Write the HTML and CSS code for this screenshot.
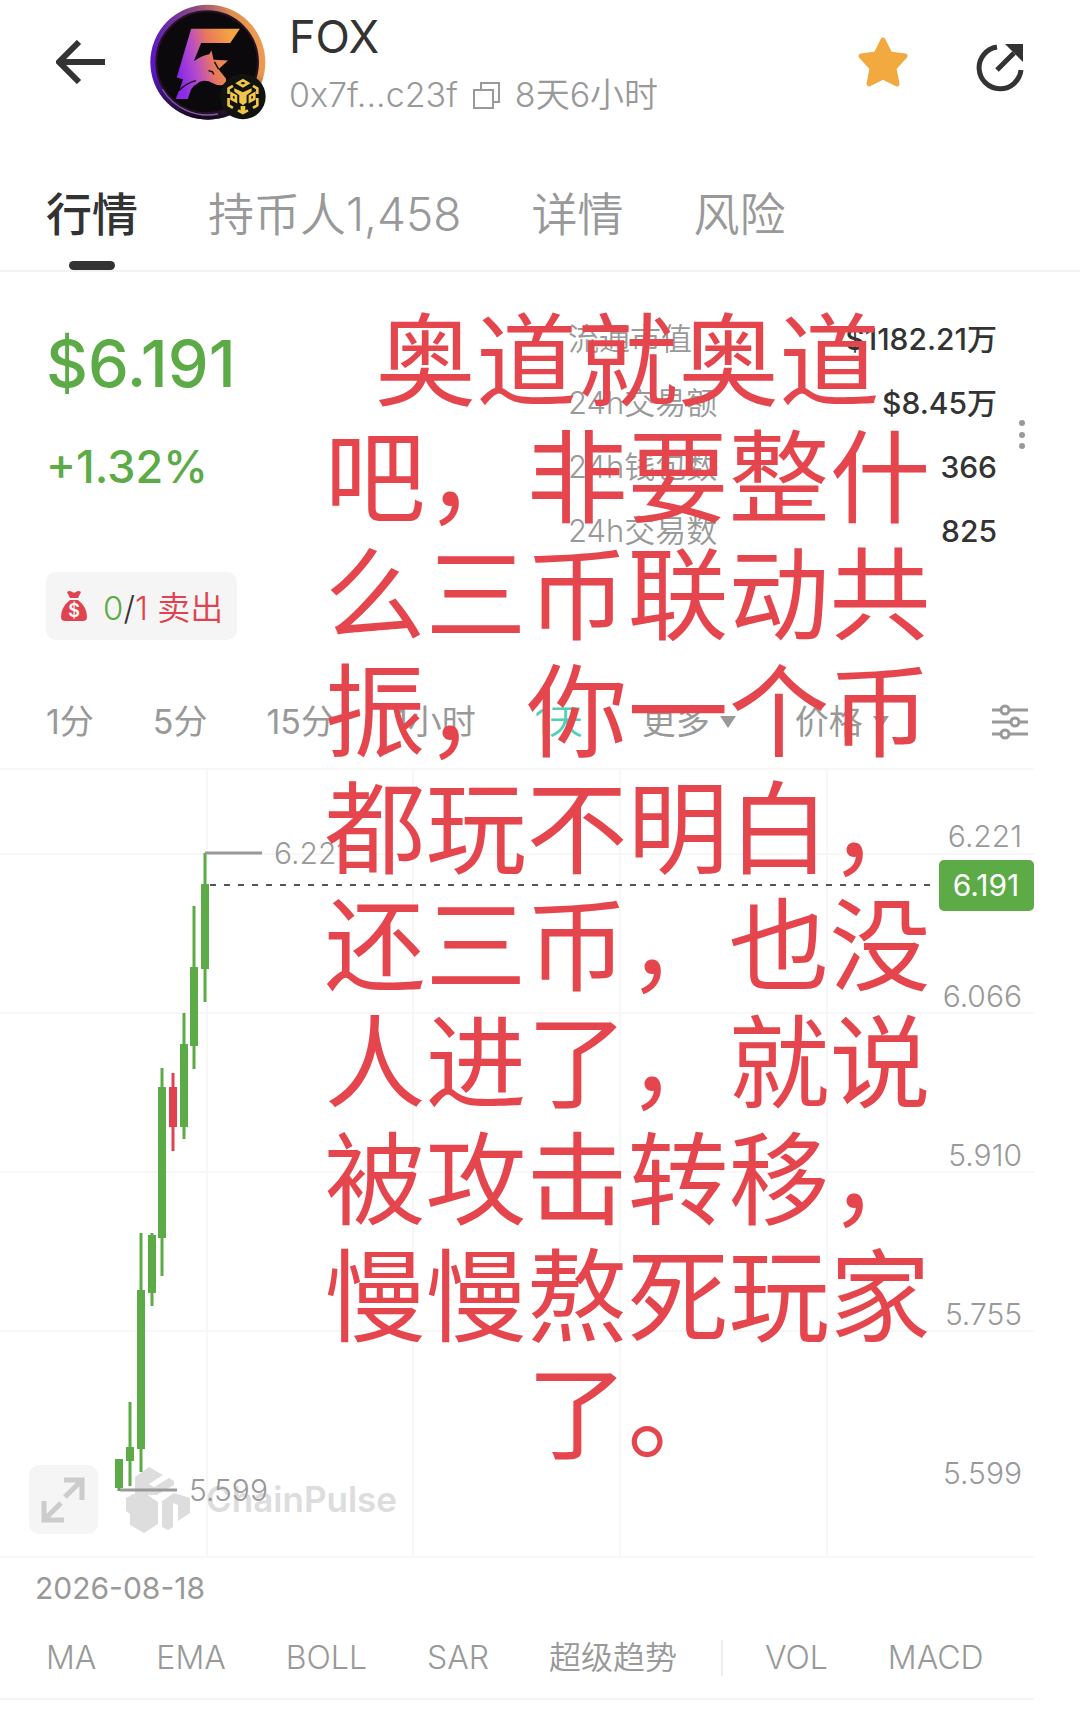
FILE: index.html
```html
<!DOCTYPE html>
<html lang="zh-CN">
<head>
    <meta charset="UTF-8">
    <meta name="viewport" content="width=device-width, initial-scale=1.0">
    <title>FOX</title>
    <link rel="stylesheet" href="styles.css">
</head>
<body>
    <header class="header">
        <button class="icon-btn" aria-label="返回">
            <svg width="50" height="44" viewBox="0 0 50 44" fill="none" stroke="#333" stroke-width="6"><path d="M49 22H4M23 2L3 22l20 20"/></svg>
        </button>
        <svg class="avatar" viewBox="60 13 345 347">
            <defs>
                <linearGradient id="ring" x1="0" y1="0.4" x2="1" y2="0.2">
                    <stop offset="0" stop-color="#5a17c4"/>
                    <stop offset="0.45" stop-color="#8a4a80"/>
                    <stop offset="0.75" stop-color="#e09050"/>
                    <stop offset="1" stop-color="#f0a050"/>
                </linearGradient>
                <linearGradient id="shade" x1="0" y1="0" x2="0" y2="1">
                    <stop offset="0.6" stop-color="#100818" stop-opacity="0"/>
                    <stop offset="1" stop-color="#100818"/>
                </linearGradient>
                <linearGradient id="fox" gradientUnits="userSpaceOnUse" x1="140" y1="190" x2="310" y2="150">
                    <stop offset="0" stop-color="#8a2be8"/>
                    <stop offset="0.3" stop-color="#b84cc8"/>
                    <stop offset="0.6" stop-color="#e8785c"/>
                    <stop offset="1" stop-color="#f5a340"/>
                </linearGradient>
            </defs>
            <circle cx="232" cy="187" r="172" fill="url(#ring)"/>
            <circle cx="232" cy="187" r="172" fill="url(#shade)"/>
            <circle cx="230" cy="187" r="152" fill="#0b090c" stroke="#2a1026" stroke-width="6"/>
            <path d="M96 268A158 158 0 0 0 262 342" fill="none" stroke="#8460a8" stroke-width="4"/>
            <path fill="url(#fox)" d="M182 87H328L299 130H212L190 184Q212 168 236 163L243 152L249 180L292 182L264 208L286 236Q290 248 276 255Q262 259 246 249Q225 238 207 246Q190 256 182 268L172 297H136L150 262L158 238L139 233Z"/>
            <path fill="none" stroke="#0b090c" stroke-width="4" d="M146 272Q166 250 196 242M234 212l12 4 4 8M252 186l12 22"/>
            <circle cx="337" cy="290" r="68" fill="#12120f"/>
            <g fill="none" stroke="#f0c649" stroke-width="8">
                <path d="M322 250l15-9 15 9-15 9zM307 258l-13 8v16M367 258l13 8v16M294 294v22l13 8M380 294v22l-13 8M303 281l13 7v16l-13-7zM371 281l-13 7v16l13-7zM322 331l15 8 15-8"/>
            </g>
            <path fill="#f0c649" d="M311 265l26 12 26-12v10l-15 11v22l-11 8-11-8v-22l-15-11zM330 318h14v14l-7 5-7-5z"/>
        </svg>
        <div class="token">
            <h1>FOX</h1>
            <div class="address">
                <span>0x7f...c23f</span>
                <button class="icon-btn" aria-label="复制">
                    <svg width="27" height="27" viewBox="0 0 27 27" fill="none" stroke="#999" stroke-width="2"><path d="M1 8h19v18H1zM8 8V1h18v19h-6"/></svg>
                </button>
                <span>8天6小时</span>
            </div>
        </div>
        <button class="icon-btn star" aria-label="收藏">
            <svg width="54" height="52" viewBox="0 0 54 52"><path d="M27 4l7 14 15 2-11 12 3 16-14-7-14 7 3-16L5 20l15-2z" fill="#f2a93f" stroke="#f2a93f" stroke-width="5" stroke-linejoin="round"/></svg>
        </button>
        <button class="icon-btn share" aria-label="分享">
            <svg width="48" height="48" viewBox="0 0 48 48"><path d="M21 3A21 21 0 1 0 45 26M21 26L38 9" fill="none" stroke="#333" stroke-width="5"/><path d="M29 0h18v18z" fill="#333"/></svg>
        </button>
    </header>

    <nav class="tabs">
        <a href="#market" class="active">行情</a>
        <a href="#holders">持币人1,458</a>
        <a href="#detail">详情</a>
        <a href="#risk">风险</a>
    </nav>

    <main class="market" id="market">
        <section class="summary">
            <div class="quote">
                <div class="price">$6.191</div>
                <div class="change">+1.32%</div>
                <div class="chip">
                    <svg width="28" height="30" viewBox="0 0 28 30">
                        <path fill="#e0434f" d="M7 1q3-2 5 0 2 1 4 0 2-2 5 0l-3 6h-8zM10 9h8q9 7 9 17 0 4-4 4H5q-4 0-4-4 0-10 9-17z"/>
                        <text class="bag-sign" x="14" y="26" text-anchor="middle">$</text>
                    </svg>
                    <span><span class="up">0</span>/<span class="down">1 卖出</span></span>
                </div>
            </div>
            <dl class="stats">
                <div><dt>流通市值</dt><dd>$1182.21万</dd></div>
                <div><dt>24h交易额</dt><dd>$8.45万</dd></div>
                <div><dt>24h钱包数</dt><dd>366</dd></div>
                <div><dt>24h交易数</dt><dd>825</dd></div>
            </dl>
            <button class="icon-btn" aria-label="更多数据">
                <svg width="24" height="30" viewBox="0 0 24 30" fill="#999"><circle cx="12" cy="3" r="3"/><circle cx="12" cy="15" r="3"/><circle cx="12" cy="26" r="3"/></svg>
            </button>
        </section>

        <div class="periods">
            <button>1分</button>
            <button>5分</button>
            <button>15分</button>
            <button>1小时</button>
            <button class="active">1天</button>
            <label class="dropdown">
                <select aria-label="周期"><option>更多</option></select>
                <svg width="16" height="12" viewBox="0 0 16 12"><path d="M0 0h16L8 12z" fill="#999"/></svg>
            </label>
            <label class="dropdown">
                <select aria-label="类型"><option>价格</option></select>
                <svg width="16" height="12" viewBox="0 0 16 12"><path d="M0 0h16L8 12z" fill="#999"/></svg>
            </label>
            <button class="icon-btn settings" aria-label="设置">
                <svg width="36" height="36" viewBox="0 0 36 36" fill="#fff" stroke="#999" stroke-width="3"><path d="M0 6h36M0 18h36M0 30h36"/><circle cx="13" cy="6" r="4"/><circle cx="23" cy="18" r="4"/><circle cx="13" cy="30" r="4"/></svg>
            </button>
        </div>

        <div class="chart">
            <svg class="kline" viewBox="0 0 1034 790">
                <!-- grid -->
                <path class="grid" d="M0 1H1034M0 86H1034M0 245H1034M0 404H1034M0 563H1034M0 789H1034M207 0V789M413 0V789M620 0V789M827 0V789"/>
                <!-- watermark -->
                <g class="watermark">
                    <path d="M135 709l14-10 14 8-14 9 5 3 15-9 5 3v4l-17 10h-22zM126 730l7-4h13l12 8v22l-14 9-14-8v-11l-4-3zM162 733l12-8 16 5v15l-12 8v-16l-5-2v24l-5 3-6-3z"/>
                    <text x="206" y="744">ChainPulse</text>
                </g>
                <!-- candles -->
                <g class="wick up">
                    <path d="M119 691V723M130 634V718M141 465V704M152 465V538M162 300V508M184 245V371M194 138V301M205 85V234"/>
                </g>
                <path class="wick down" d="M173 305V383"/>
                <g class="body up">
                    <path d="M119 691V720M130 679V693M141 522V681M152 467V525M162 319V470M184 276V359M194 199V278M205 116V201"/>
                </g>
                <path class="body down" d="M173 319V359"/>
                <path class="leader" d="M205 85H262M120 722H177"/>
                <text class="mark" x="274" y="96">6.221</text>
                <text class="mark" x="189" y="733">5.599</text>
                <path class="current" d="M210 117H938"/>
                <!-- price axis -->
                <g class="axis" text-anchor="end">
                    <text x="1022" y="79">6.221</text>
                    <text x="1022" y="239">6.066</text>
                    <text x="1022" y="398">5.910</text>
                    <text x="1022" y="557">5.755</text>
                    <text x="1022" y="716">5.599</text>
                </g>
                <rect class="tag" x="939" y="92" width="95" height="51" rx="5"/>
                <text class="tag-text" x="986" y="128" text-anchor="middle">6.191</text>
            </svg>
            <button class="expand" aria-label="全屏">
                <svg width="44" height="46" viewBox="0 0 44 46" fill="none" stroke="#ccc" stroke-width="5"><path d="M23 3h18v20M40 4L24 20M3 24v19h20M4 42l16-16"/></svg>
            </button>
        </div>
        <div class="date">2026-08-18</div>

        <div class="indicators">
            <div class="group">
                <button>MA</button>
                <button>EMA</button>
                <button>BOLL</button>
                <button>SAR</button>
                <button>超级趋势</button>
            </div>
            <div class="group">
                <button>VOL</button>
                <button>MACD</button>
            </div>
        </div>
    </main>

    <p class="caption">奥道就奥道吧，非要整什么三币联动共振，你一个币都玩不明白，还三币，也没人进了，就说被攻击转移，慢慢熬死玩家了。</p>
</body>
</html>
```
FILE: styles.css
```css
* {
    box-sizing: border-box;
}
body {
    margin: 0;
    position: relative;
    background: #fff;
    color: #333;
    font-family: Inter, "Noto Sans CJK SC", sans-serif;
}
button, select {
    margin: 0;
    padding: 0;
    border: 0;
    background: none;
    color: inherit;
    font: inherit;
}
svg {
    display: block;
}
.up {
    color: #5dab47;
}
.down {
    color: #e0434f;
}

/* header */
.header {
    display: flex;
    align-items: center;
    padding: 4px 56px 0;
}
.avatar {
    width: 116px;
    height: 116px;
    margin: 0 23px 0 44px;
}
.token h1 {
    margin: 0;
    font-size: 45px;
    font-weight: 400;
    line-height: 66px;
}
.address {
    display: flex;
    align-items: center;
    gap: 15px;
    color: #999;
    font-size: 34px;
    font-weight: 350;
    line-height: 50px;
}
.star {
    margin-left: auto;
    margin-right: 66px;
}
.share {
    padding-top: 12px;
}

/* tabs */
.tabs {
    display: flex;
    gap: 70px;
    margin-top: 64px;
    padding: 0 46px;
    border-bottom: 2px solid #f2f2f2;
}
.tabs a {
    position: relative;
    padding-bottom: 26px;
    color: #999;
    font-size: 46px;
    font-weight: 350;
    line-height: 60px;
    text-decoration: none;
}
.tabs a.active {
    color: #333;
    font-weight: 500;
}
.tabs a.active::after {
    content: "";
    position: absolute;
    left: 50%;
    bottom: 0;
    width: 46px;
    height: 9px;
    margin-left: -23px;
    border-radius: 5px;
    background: #333;
}

/* price and stats */
.summary {
    display: flex;
    align-items: flex-start;
    padding: 35px 46px 0;
}
.quote {
    flex: 1;
}
.price {
    color: #5dab47;
    font-size: 65px;
    font-weight: 500;
    line-height: 114px;
}
.change {
    color: #5dab47;
    font-size: 45px;
    font-weight: 450;
    line-height: 92px;
}
.chip {
    display: inline-flex;
    align-items: center;
    gap: 15px;
    height: 68px;
    margin-top: 59px;
    padding: 0 14px;
    border-radius: 10px;
    background: #f5f5f5;
    font-size: 33px;
    font-weight: 350;
}
.bag-sign {
    fill: #fff;
    font-size: 18px;
    font-weight: 600;
}
.stats {
    width: 429px;
    margin: 0 13px 0 0;
}
.stats div {
    display: flex;
    justify-content: space-between;
    line-height: 64px;
}
.stats dt {
    color: #999;
    font-size: 31px;
    font-weight: 350;
}
.stats dd {
    margin: 0;
    font-size: 30px;
    font-weight: 500;
}
.summary > .icon-btn {
    margin-top: 113px;
}

/* periods */
.periods {
    display: flex;
    align-items: center;
    gap: 59px;
    margin-top: 58px;
    padding: 0 52px 22px 46px;
    color: #999;
    font-size: 34px;
    line-height: 48px;
}
.periods .active {
    color: #4fd1b8;
}
.periods .settings {
    margin-left: auto;
}
.dropdown {
    display: flex;
    align-items: center;
    gap: 10px;
}
.dropdown select {
    appearance: none;
}

/* chart */
.chart {
    position: relative;
    margin-right: 46px;
}
.kline {
    width: 100%;
}
.grid {
    fill: none;
    stroke: #f7f7f7;
    stroke-width: 2;
}
.wick, .body {
    fill: none;
    stroke: currentColor;
}
.wick {
    stroke-width: 3;
}
.body {
    stroke-width: 8;
}
.leader {
    fill: none;
    stroke: #999;
    stroke-width: 3;
}
.current {
    fill: none;
    stroke: #555;
    stroke-width: 2;
    stroke-dasharray: 6 8;
}
.mark, .axis {
    fill: #999;
    font-size: 30px;
    font-weight: 350;
}
.tag {
    fill: #5dab47;
}
.tag-text {
    fill: #fff;
    font-size: 30px;
}
.watermark {
    fill: #ddd;
    font-size: 35px;
    font-weight: 600;
}
.expand {
    position: absolute;
    left: 29px;
    bottom: 24px;
    width: 69px;
    height: 69px;
    padding: 0 12px;
    border-radius: 10px;
    background: #f5f5f5;
}
.date {
    padding-left: 35px;
    color: #999;
    font-size: 30px;
    line-height: 60px;
}

/* indicators */
.indicators {
    display: flex;
    margin-right: 46px;
    padding: 22px 0 22px 46px;
    border-bottom: 2px solid #f5f5f5;
    color: #999;
    font-size: 32px;
    font-weight: 350;
    line-height: 36px;
}
.group {
    display: flex;
    gap: 60px;
}
.group + .group {
    margin-left: 44px;
    padding-left: 42px;
    border-left: 2px solid #eee;
}

/* text over the chart */
.caption {
    position: absolute;
    top: 296px;
    left: 30%;
    width: 607px;
    margin: 0;
    color: #e5464d;
    font-family: "Noto Sans CJK SC", sans-serif;
    font-size: 101px;
    line-height: 117px;
    text-align: center;
    text-spacing-trim: space-all;
}
```
